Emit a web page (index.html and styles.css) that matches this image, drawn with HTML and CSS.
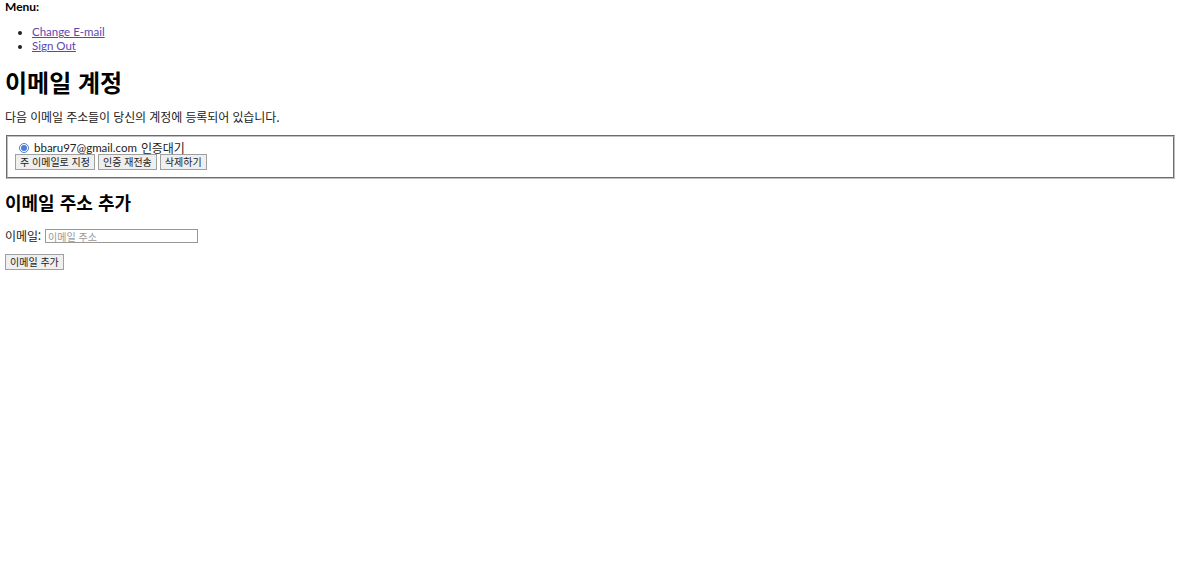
FILE: index.html
```html
<!DOCTYPE html>
<html lang="ko">
<head>
  <meta charset="UTF-8" />
  <title>이메일 계정</title>
  <link rel="stylesheet" href="styles.css">
</head>
<body>
  <div class="menu">
    <strong>Menu:</strong>
    <ul>
      <li><a href="#">Change E-mail</a></li>
      <li><a href="#">Sign Out</a></li>
    </ul>
  </div>

  <h1>이메일 계정</h1>
  <p class="ko">다음 이메일 주소들이 당신의 계정에 등록되어 있습니다.</p>

  <form class="email-list">
    <fieldset>
      <div class="email-row">
        <label><input type="radio" name="email" checked /> bbaru97@gmail.com</label>
        <span class="ko">인증대기</span>
      </div>
      <div class="actions">
        <button type="button">주 이메일로 지정</button>
        <button type="button">인증 재전송</button>
        <button type="button">삭제하기</button>
      </div>
    </fieldset>
  </form>

  <h2>이메일 주소 추가</h2>
  <form class="add-email">
    <p><label class="ko" for="id_email">이메일:</label> <input type="email" id="id_email" placeholder="이메일 주소" /></p>
    <button type="button">이메일 추가</button>
  </form>
</body>
</html>
```

FILE: styles.css
```css
body {
  margin: 0 7px 0 4px;
  font-family: Lato, "Noto Sans CJK KR", sans-serif;
  font-size: 11.5px;
  line-height: 14px;
  color: #222;
  background: #fff;
}
.ko {
  font-family: "Noto Sans CJK KR", sans-serif;
  font-size: 12px;
  letter-spacing: -0.1px;
}
.menu strong {
  display: block;
  padding-left: 1px;
  font-size: 12px;
  color: #000;
}
.menu ul {
  margin: 11px 0 0;
  padding-left: 28px;
}
a {
  color: #5e46b0;
}
h1 {
  margin: 14px 0 0 1px;
  font-family: "Noto Sans CJK KR", sans-serif;
  font-size: 24px;
  line-height: 30px;
  color: #000;
}
p {
  margin: 0;
}
h1 + p {
  margin: 13px 0 0 1px;
}
.email-list {
  margin-top: 11px;
}
fieldset {
  margin: 0 2px;
  padding: 4px 7px 7px;
  border: 2px groove #c0c0c0;
}
.email-row {
  display: flex;
  align-items: center;
  gap: 4px;
  height: 13px;
}
.email-row label {
  display: inline-flex;
  align-items: center;
  gap: 5px;
  padding-left: 4px;
}
.email-row input {
  margin: 0;
  width: 10px;
  height: 10px;
  accent-color: #4a7fd6;
}
.actions {
  display: flex;
  gap: 3px;
}
button {
  height: 16px;
  font-family: "Noto Sans CJK KR", sans-serif;
  font-size: 10px;
  line-height: 12px;
  padding: 0 4px;
  border: 1px solid #a0a0a0;
  border-radius: 0;
  background: #efefef;
  color: #222;
}
h2 {
  margin: 11px 0 0 1px;
  font-family: "Noto Sans CJK KR", sans-serif;
  font-size: 18px;
  line-height: 24px;
  color: #000;
}
.add-email p {
  margin: 15px 0 0 1px;
  display: flex;
  align-items: center;
  gap: 4px;
}
.add-email input {
  box-sizing: border-box;
  width: 153px;
  height: 14px;
  margin: 0;
  padding: 0 2px;
  font-family: "Noto Sans CJK KR", sans-serif;
  font-size: 10px;
  border: 1px solid #999;
}
.add-email input::placeholder {
  color: #999;
}
.add-email button {
  margin-top: 11px;
  margin-left: 1px;
}
```
